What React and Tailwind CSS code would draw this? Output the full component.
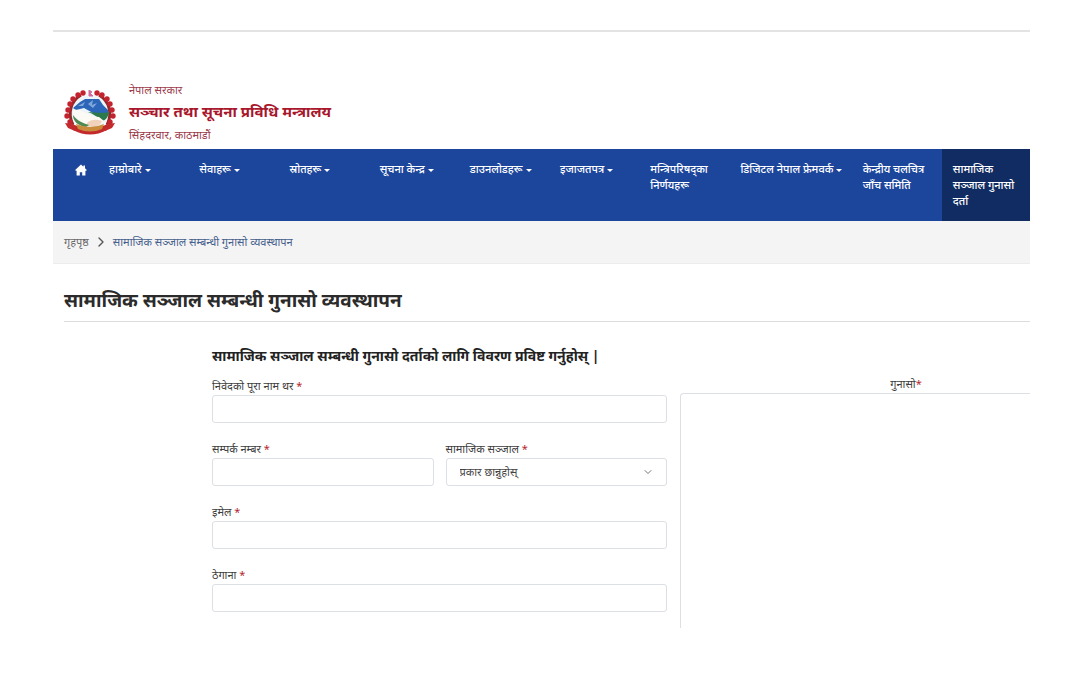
import { clsx } from 'clsx';
import { ChevronDown, ChevronRight } from 'lucide-react';

const NAV_ITEMS = [
  { label: 'हाम्रोबारे', menu: true },
  { label: 'सेवाहरू', menu: true },
  { label: 'स्रोतहरू', menu: true },
  { label: 'सूचना केन्द्र', menu: true },
  { label: 'डाउनलोडहरू', menu: true },
  { label: 'इजाजतपत्र', menu: true },
  { label: 'मन्त्रिपरिषद्का निर्णयहरू' },
  { label: 'डिजिटल नेपाल फ्रेमवर्क', menu: true },
  { label: 'केन्द्रीय चलचित्र जाँच समिति' },
  { label: 'सामाजिक सञ्जाल गुनासो दर्ता', active: true },
];

// rhododendron garland, left half (mirrored for the right one)
const FLOWERS = [
  [19, 3], [14, 5], [9, 9], [6, 14], [4, 20], [3, 26], [6, 32],
];

function Emblem() {
  return (
    <svg viewBox="0 0 52 46" className="h-[46px] w-[52px] shrink-0" aria-hidden="true">
      <ellipse cx="26" cy="22" rx="19" ry="17" fill="#eef5fa" />
      <g fill="none" stroke="#8d2a2a" strokeWidth="3">
        <path d="M17 5 C7 11 3 23 9 35" />
        <path d="M35 5 C45 11 49 23 43 35" />
      </g>
      <g fill="#c3232f">
        {FLOWERS.map(([x, y]) => (
          <g key={y}>
            <circle cx={x} cy={y} r="2.7" />
            <circle cx={52 - x} cy={y} r="2.7" />
          </g>
        ))}
      </g>
      <path d="M9 18 L16 12 L21 9 L35 9 L39 15 L44 20 L45 24 L37 23 L29 23 L20 18 L12 20 Z" fill="#2b66b8" />
      <path d="M14 16 L21 12 L19 16 Z M24 14 L29 10 L28 15 L33 13 L29 18 Z" fill="#7fa7dc" />
      <path d="M24 22 C31 22 36 24 45 22 C44 28 41 31 37 31 C33 26 29 24 24 22 Z" fill="#2c7a4b" />
      <path d="M9 20 C18 18 22 26 35 27 L40 31 C36 36 31 37 26 36 C20 34 13 31 9 24 Z" fill="#fbfaf4" />
      <path d="M23 33 C27 29 33 29 38 31 C36 36 31 38 23 36 Z" fill="#f1d2bd" />
      <path d="M9 25 C13 31 19 33 25 35 L22 37 C14 36 9 31 9 25 Z" fill="#4f8a52" />
      <path d="M25 0 L28 2 L26 3 L29 6 L25 6 Z" fill="#d06a9c" stroke="#d06a9c" />
      <path d="M1 33 L9 34 L11 41 L4 38 Z M51 33 L43 34 L41 41 L48 38 Z" fill="#c22a2c" />
      <path d="M8 34 Q26 42 44 34 L43 40 Q26 49 9 40 Z" fill="#c22a2c" />
      <path d="M12 34 Q26 40 40 34 L38 39 Q26 44 14 39 Z" fill="#c98b3c" />
    </svg>
  );
}

function HomeIcon() {
  return (
    <svg viewBox="0 0 12 12" className="h-3 w-3" fill="currentColor" aria-hidden="true">
      <path d="M6 0.5 L8.4 2.7 V1.4 H10 V4.2 L11.8 6 L11 6.9 L10.4 6.4 V11.5 H7.2 V8.2 H4.8 V11.5 H1.6 V6.4 L1 6.9 L0.2 6 Z" />
    </svg>
  );
}

function Header() {
  return (
    <header className="flex items-start gap-[13px] px-[11px] pt-12 pb-1 text-[#9b3a4a]">
      <div className="pt-2.5">
        <Emblem />
      </div>
      <div className="flex flex-col">
        <p className="text-[11px] leading-5">नेपाल सरकार</p>
        <p className="text-[15px] leading-[22px] font-bold text-[#a8172c]">सञ्चार तथा सूचना प्रविधि मन्त्रालय</p>
        <p className="pt-[3px] text-[11px] leading-5">सिंहदरवार, काठमाडौं</p>
      </div>
    </header>
  );
}

function NavBar() {
  return (
    <nav className="grid grid-cols-[45fr_repeat(7,90fr)_122fr_90fr_88fr] bg-[#1c469c] text-[11px] leading-4 font-medium text-white">
      <a href="#home" aria-label="गृहपृष्ठ" className="flex justify-center pt-[15px] pl-[11px]">
        <HomeIcon />
      </a>
      {NAV_ITEMS.map(({ label, menu, active }) => (
        <a
          key={label}
          href="#nav"
          className={clsx('min-h-[72px] py-3 pl-[11px]', active && 'bg-[#112c62] pr-[11px]')}
        >
          {label}
          {menu && (
            <span className="ml-[3px] inline-block border-x-3 border-t-3 border-x-transparent border-t-white align-middle" />
          )}
        </a>
      ))}
    </nav>
  );
}

function Breadcrumb() {
  return (
    <div className="flex h-[43px] items-center gap-1 border-b border-[#ececec] bg-[#f5f4f5] px-[11px] text-[11px]">
      <a href="#home" className="text-[#6b6b6b]">गृहपृष्ठ</a>
      <ChevronRight className="h-4 w-4 text-[#555]" />
      <a href="#complaint" className="text-[#45608c]">सामाजिक सञ्जाल सम्बन्धी गुनासो व्यवस्थापन</a>
    </div>
  );
}

const controlClass = 'h-7 w-full rounded-[3px] border border-[#dcdfe4] bg-white text-[11px] text-[#444] outline-none';

function Field({ id, label, children }) {
  return (
    <div className="flex flex-col">
      <label htmlFor={id} className="h-[18px] text-[11px] leading-[18px] text-[#3d3d3d]">
        {label} <span className="text-[#b3262e]">*</span>
      </label>
      {children || <input id={id} type="text" className={controlClass} />}
    </div>
  );
}

function ComplaintForm() {
  return (
    <form className="pt-6 pl-[159px]">
      <h2 className="text-[14px] leading-5 font-bold text-[#222]">
        सामाजिक सञ्जाल सम्बन्धी गुनासो दर्ताको लागि विवरण प्रविष्ट गर्नुहोस् |
      </h2>
      <div className="grid grid-cols-[455fr_350fr] gap-x-[13px]">
        <div className="flex flex-col gap-[17px] pt-[11px] pb-4">
          <Field id="name" label="निवेदको पूरा नाम थर" />
          <div className="grid grid-cols-2 gap-3">
            <Field id="phone" label="सम्पर्क नम्बर" />
            <Field id="network" label="सामाजिक सञ्जाल">
              <div className="relative">
                <select id="network" className={clsx(controlClass, 'appearance-none px-[13px]')}>
                  <option>प्रकार छान्नुहोस्</option>
                </select>
                <ChevronDown className="pointer-events-none absolute top-2 right-[13px] h-3 w-3 text-[#777]" />
              </div>
            </Field>
          </div>
          <Field id="email" label="इमेल" />
          <Field id="address" label="ठेगाना" />
        </div>
        <div className="flex flex-col pt-[9px]">
          <label htmlFor="complaint" className="h-[18px] pl-[102px] text-center text-[11px] leading-[18px] text-[#3d3d3d]">
            गुनासो<span className="text-[#b3262e]">*</span>
          </label>
          <textarea
            id="complaint"
            className="w-full flex-1 resize-none rounded-tl-[4px] border-t border-l border-[#dcdfe4] p-2 text-[11px] outline-none"
          />
        </div>
      </div>
    </form>
  );
}

export default function App() {
  return (
    <div className="min-h-screen bg-white pt-[30px] pr-[50px] pl-[53px] font-['Noto_Sans','Noto_Sans_Devanagari',sans-serif]">
      <div className="border-t-2 border-[#e3e3e3]">
        <Header />
        <NavBar />
        <Breadcrumb />
        <main className="pl-[11px]">
          <h1 className="border-b border-[#dcdcdc] pt-[22px] pb-[7px] text-[19px] leading-7 font-bold text-[#2b2b2b]">
            सामाजिक सञ्जाल सम्बन्धी गुनासो व्यवस्थापन
          </h1>
        </main>
        <ComplaintForm />
      </div>
    </div>
  );
}
